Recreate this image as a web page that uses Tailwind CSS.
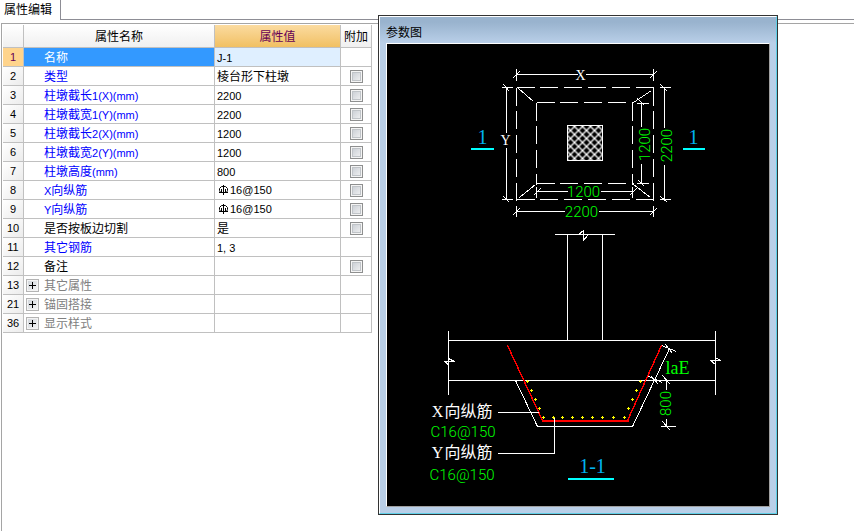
<!DOCTYPE html>
<html lang="zh-CN">
<head>
<meta charset="utf-8">
<title>属性编辑</title>
<script src="https://cdn.jsdelivr.net/npm/@tailwindcss/browser@4"></script>
</head>
<body class="relative flex min-h-screen flex-col bg-white font-['Noto_Sans_CJK_SC',sans-serif] text-[12px] leading-4 text-black">

<header class="flex h-5">
  <h1 class="w-[61px] border-r border-[#8d8d95] pl-1 pt-px">属性编辑</h1>
  <div class="flex-1 border-b border-[#8d8d95]"></div>
</header>

<main class="ml-px mt-[3px] flex-1 border-l border-t border-[#a5a5a5] pl-px pt-px">
  <table class="w-[369px] table-fixed border-separate border-spacing-0 [&_td]:h-[19px] [&_td]:border-b [&_td]:border-r [&_td]:border-[#c0c0c0] [&_td]:p-0 [&_th]:h-[19px] [&_th]:border-b [&_th]:border-r [&_th]:border-[#c0c0c0] [&_th]:p-0 [&_th]:font-normal [&_tbody_th]:bg-linear-to-br [&_tbody_th]:from-white [&_tbody_th]:to-[#ececec] [&_tbody_th]:text-[11px] [&_tbody_th]:font-['Liberation_Sans',sans-serif] [&_span]:font-['Liberation_Sans',sans-serif] [&_span]:text-[11px] [&_input]:block [&_input]:mx-auto [&_input]:size-[13px] [&_input]:appearance-none [&_input]:border [&_input]:border-[#8e8f8f] [&_input]:bg-linear-to-br [&_input]:from-[#c4c9d0] [&_input]:to-[#f6f6f6] [&_input]:shadow-[inset_0_0_0_1px_#f4f4f4,inset_0_0_0_2px_#c0c4c8] [&_button]:flex [&_button]:size-[13px] [&_button]:items-center [&_button]:justify-center [&_button]:border [&_button]:border-[#b4b4b4] [&_button]:bg-linear-to-br [&_button]:from-[#cfd4da] [&_button]:to-[#f6f6f6] [&_button]:shadow-[inset_0_0_0_1px_#f4f4f4]">
    <colgroup>
      <col class="w-[21px]"><col class="w-[191px]"><col class="w-[126px]"><col class="w-[31px]">
    </colgroup>
    <thead>
      <tr class="bg-linear-to-b from-white to-[#efefef] [&_th]:h-[23px]">
        <th></th>
        <th>属性名称</th>
        <th class="bg-linear-to-b from-[#fbdb9f] to-[#f1c062] text-[#660055]">属性值</th>
        <th>附加</th>
      </tr>
    </thead>
    <tbody>
      <tr><th class="bg-[#ffd48c] bg-none! text-[#660055]">1</th><td class="bg-[#3399ff] text-white"><div class="pl-5">名称</div></td><td class="bg-[#dfefff]"><div class="pl-0.5"><span>J-1</span></div></td><td></td></tr>
      <tr><th>2</th><td><div class="pl-5 text-[#0000ff]">类型</div></td><td><div class="pl-0.5">棱台形下柱墩</div></td><td><input type="checkbox" aria-label="附加 类型"></td></tr>
      <tr><th>3</th><td><div class="pl-5 text-[#0000ff]">柱墩截长<span>1(X)(mm)</span></div></td><td><div class="pl-0.5"><span>2200</span></div></td><td><input type="checkbox" aria-label="附加 柱墩截长1"></td></tr>
      <tr><th>4</th><td><div class="pl-5 text-[#0000ff]">柱墩截宽<span>1(Y)(mm)</span></div></td><td><div class="pl-0.5"><span>2200</span></div></td><td><input type="checkbox" aria-label="附加 柱墩截宽1"></td></tr>
      <tr><th>5</th><td><div class="pl-5 text-[#0000ff]">柱墩截长<span>2(X)(mm)</span></div></td><td><div class="pl-0.5"><span>1200</span></div></td><td><input type="checkbox" aria-label="附加 柱墩截长2"></td></tr>
      <tr><th>6</th><td><div class="pl-5 text-[#0000ff]">柱墩截宽<span>2(Y)(mm)</span></div></td><td><div class="pl-0.5"><span>1200</span></div></td><td><input type="checkbox" aria-label="附加 柱墩截宽2"></td></tr>
      <tr><th>7</th><td><div class="pl-5 text-[#0000ff]">柱墩高度<span>(mm)</span></div></td><td><div class="pl-0.5"><span>800</span></div></td><td><input type="checkbox" aria-label="附加 柱墩高度"></td></tr>
      <tr><th>8</th><td><div class="pl-5 text-[#0000ff]"><span>X</span>向纵筋</div></td><td><div class="flex items-center gap-0.5 pl-1">
        <svg class="h-[10px] w-[9px]" viewBox="0 0 9 10" fill="none" stroke="#000"><path d="M4.5 0V10M2.5 1.5H6.5L8.5 3.5V5.5L7.5 7.5M2.5 1.5L.5 3.5V5.5L1.5 7.5M0 7.5H9M2.5 4V7M6.5 4V7"/></svg>
        <span>16@150</span></div></td><td><input type="checkbox" aria-label="附加 X向纵筋"></td></tr>
      <tr><th>9</th><td><div class="pl-5 text-[#0000ff]"><span>Y</span>向纵筋</div></td><td><div class="flex items-center gap-0.5 pl-1">
        <svg class="h-[10px] w-[9px]" viewBox="0 0 9 10" fill="none" stroke="#000"><path d="M4.5 0V10M2.5 1.5H6.5L8.5 3.5V5.5L7.5 7.5M2.5 1.5L.5 3.5V5.5L1.5 7.5M0 7.5H9M2.5 4V7M6.5 4V7"/></svg>
        <span>16@150</span></div></td><td><input type="checkbox" aria-label="附加 Y向纵筋"></td></tr>
      <tr><th>10</th><td><div class="pl-5">是否按板边切割</div></td><td><div class="pl-0.5">是</div></td><td><input type="checkbox" aria-label="附加 是否按板边切割"></td></tr>
      <tr><th>11</th><td><div class="pl-5 text-[#0000ff]">其它钢筋</div></td><td><div class="pl-0.5"><span>1, 3</span></div></td><td></td></tr>
      <tr><th>12</th><td><div class="pl-5">备注</div></td><td></td><td><input type="checkbox" aria-label="附加 备注"></td></tr>
      <tr><th>13</th><td><div class="flex items-center gap-[5px] pl-0.5 text-[#808080]"><button type="button" aria-label="展开其它属性"><svg class="size-[9px]" viewBox="0 0 9 9" stroke="#000"><path d="M1 4.5H8M4.5 1V8"/></svg></button>其它属性</div></td><td></td><td></td></tr>
      <tr><th>21</th><td><div class="flex items-center gap-[5px] pl-0.5 text-[#808080]"><button type="button" aria-label="展开锚固搭接"><svg class="size-[9px]" viewBox="0 0 9 9" stroke="#000"><path d="M1 4.5H8M4.5 1V8"/></svg></button>锚固搭接</div></td><td></td><td></td></tr>
      <tr><th>36</th><td><div class="flex items-center gap-[5px] pl-0.5 text-[#808080]"><button type="button" aria-label="展开显示样式"><svg class="size-[9px]" viewBox="0 0 9 9" stroke="#000"><path d="M1 4.5H8M4.5 1V8"/></svg></button>显示样式</div></td><td></td><td></td></tr>
    </tbody>
  </table>
</main>

<section class="absolute left-[378px] top-[15px] border border-[#333333]" aria-label="参数图">
  <div class="border border-b-[#5fd0e8] border-l-white border-r-[#5fd0e8] border-t-white bg-[#b9cfe8] pb-1.5">
    <h2 class="h-[26px] bg-linear-to-b from-[#99b3ce] from-20% to-[#b9cfe8] pl-1.5 pt-[7px]">参数图</h2>
    <div class="mx-1.5 border border-b-[#a0a0a0] border-l-white border-r-[#a0a0a0] border-t-white bg-black">
      <svg class="block h-[462px] w-[382px]" viewBox="386.5 43.5 382 462" fill="none" stroke="#fff" stroke-width="1" font-family="'Liberation Sans','Noto Sans CJK SC',sans-serif">
        <defs>
          <pattern id="hatch" x="574" y="126" width="8" height="8" patternUnits="userSpaceOnUse">
            <path d="M-1 -1L9 9M9 -1L-1 9" stroke="#fff" stroke-width="1.3"/>
          </pattern>
          <path id="dot" d="M-1.5 0H1.5M0 -1.5V1.5" stroke="#ff0" shape-rendering="geometricPrecision"/>
        </defs>

        <g shape-rendering="crispEdges">
          <!-- plan: pedestal outline -->
          <path stroke-dasharray="18 5.8" d="M516 87H654M516 199H654M516 87V200M653 87V200M536 102H633M536 183H633M536 102V184M632 102V184"/>
          <path d="M518 88L533 101M651 90L633 102M519 197L535 184M650 197L633 184"/>
          <rect x="567" y="125" width="35" height="35" fill="url(#hatch)"/>

          <!-- plan: dimension lines -->
          <path d="M516 74H577M585 74H653M516 68V80M653 68V80M512 78L519 71M649 78L656 71"/>
          <path d="M506 87V132M506 147V199M501 87H512M501 199H512M503 84L509 91M503 196L509 202"/>
          <path d="M641 103V126M641 163V183M636 103H648M636 183H648M637 98L644 105M638 180L644 186"/>
          <path d="M664 87V127M664 164V199M659 87H670M659 199H670M660 84L667 91M660 196L667 202"/>
          <path d="M536 191H567M600 191H632M536 186V197M632 186V197M533 195L540 188M629 195L636 188"/>
          <path d="M516 211H564M598 211H653M516 205V216M653 205V216M512 215L519 208M649 215L656 208"/>

          <!-- section: column and slab -->
          <path d="M554 234H614M578 234L583 230V240L588 234M567 234V340M602 234V340"/>
          <path d="M448 340H715M448 380H715M448 330V394M715 330V394"/>
          <path d="M444 361H454M444 361L449 365M448 358L454 361M710 360H720M710 360L715 364M715 357L720 360"/>
          <path d="M515 380L537 426H632L669 348"/>
          <path d="M661 345L676 351M665 344L672 353M648 376L662 382M651 376L658 384"/>
          <path d="M666 380V389M666 418V426M660 426H675M660 380H670M662 375L670 384M662 421L670 430"/>
          <path stroke="#f00" stroke-width="1.4" d="M507 345L542 420M627 420L661 345"/>
          <path stroke="#f00" stroke-width="2" d="M541 420.500H628"/>
          <path d="M497 412H538M497 453H554V417"/>

          <!-- rebar -->
          <use href="#dot" x="527" y="381"/><use href="#dot" x="531" y="390"/><use href="#dot" x="535" y="399"/><use href="#dot" x="539" y="408"/><use href="#dot" x="543" y="417"/>
          <use href="#dot" x="553" y="417"/><use href="#dot" x="562" y="417"/><use href="#dot" x="572" y="417"/><use href="#dot" x="582" y="417"/><use href="#dot" x="592" y="417"/><use href="#dot" x="602" y="417"/><use href="#dot" x="613" y="417"/><use href="#dot" x="624" y="417"/>
          <use href="#dot" x="628" y="408"/><use href="#dot" x="632" y="399"/><use href="#dot" x="636" y="390"/><use href="#dot" x="640" y="381"/>

          <path stroke="#0ff" stroke-width="2" d="M470 148.500H493M682 148.500H704M567 478.500H613"/>
        </g>

        <g stroke="none" fill="#0f0" font-family="Roboto,'Liberation Sans',sans-serif" font-weight="300" font-size="15" text-anchor="middle">
          <text x="583" y="196">1200</text>
          <text x="581" y="216">2200</text>
          <text transform="translate(649 144) rotate(-90)">1200</text>
          <text transform="translate(671 145) rotate(-90)">2200</text>
          <text transform="translate(670 403) rotate(-90)">800</text>
        </g>
        <g stroke="none" fill="#0f0" font-family="Roboto,'Liberation Sans',sans-serif" font-weight="300" font-size="15">
          <text x="430" y="436">C16@150</text>
          <text x="429" y="479">C16@150</text>
          <text x="665" y="373" font-family="'Liberation Serif',serif" font-weight="400" font-size="18">laE</text>
        </g>
        <g stroke="none" fill="#fff" font-size="16">
          <text x="444" y="416">向纵筋</text>
          <text x="444" y="457">向纵筋</text>
          <g font-family="'Liberation Serif',serif" font-size="14" text-anchor="middle">
            <text x="437" y="416" font-size="16">X</text>
            <text x="437" y="457" font-size="16">Y</text>
            <text x="580" y="79">X</text>
            <text x="505" y="144">Y</text>
          </g>
        </g>
        <g stroke="none" fill="#00b4f0" font-family="'Liberation Serif',serif" font-size="20" text-anchor="middle">
          <text x="482" y="143">1</text>
          <text x="693" y="143">1</text>
          <text x="592" y="472">1-1</text>
        </g>
      </svg>
    </div>
  </div>
</section>
</body>
</html>
